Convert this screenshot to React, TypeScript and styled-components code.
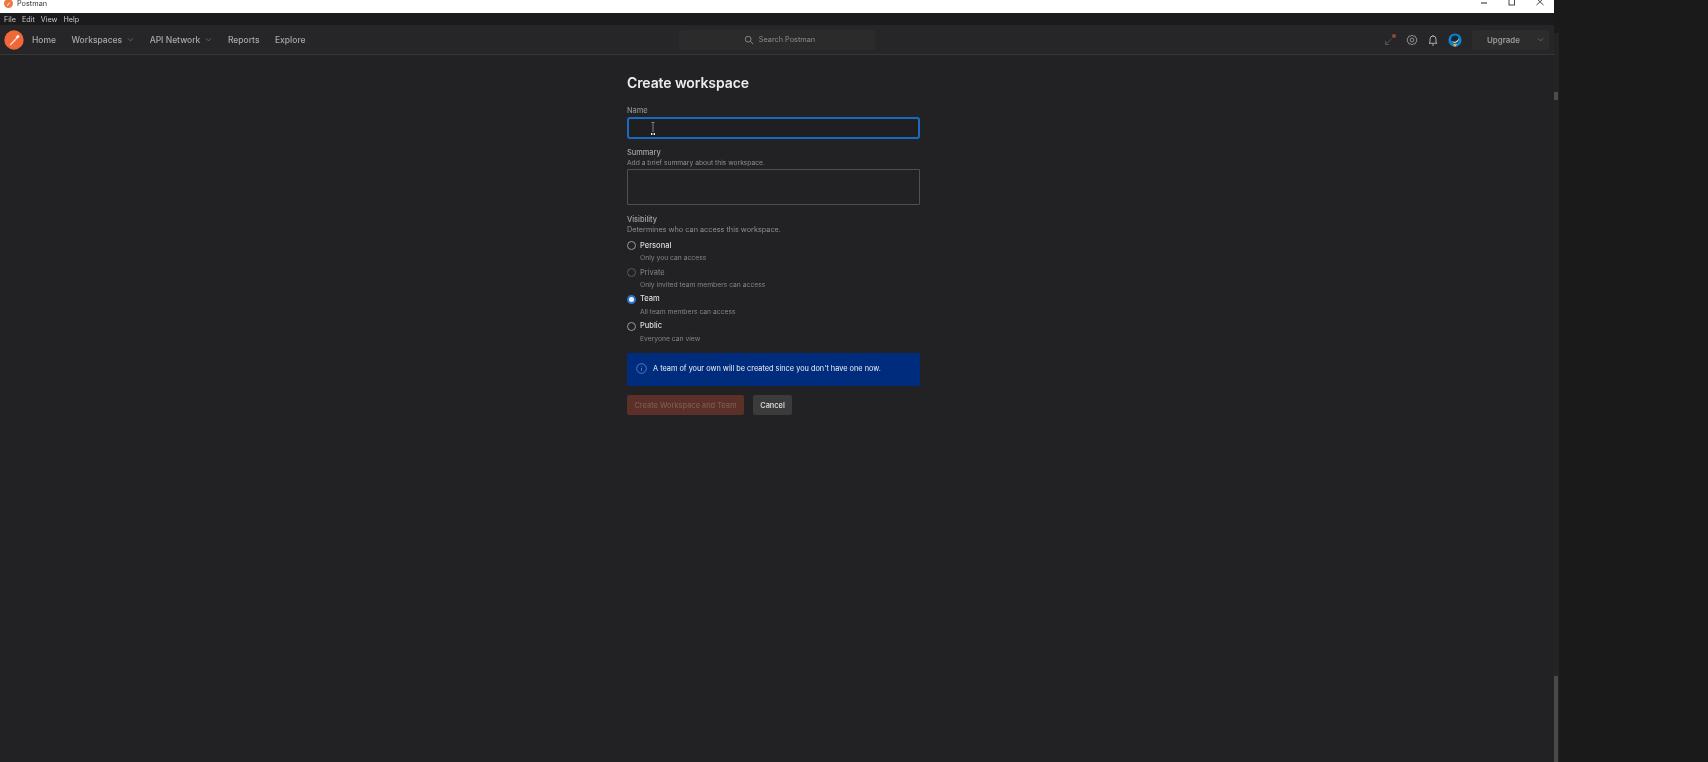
import React from "react";
import styled, { createGlobalStyle } from "styled-components";

const Global = createGlobalStyle`
  html, body { margin: 0; padding: 0; height: 100%; background: #1a1a1a; overflow: hidden; }
  #root { height: 100%; }
  * { box-sizing: border-box; }
`;

const FONT = `Inter, "Liberation Sans", sans-serif`;

const Screen = styled.div`
  display: flex;
  width: 1708px;
  height: 762px;
  overflow: hidden;
  font-family: ${FONT};
  background: #1a1a1a;
  filter: blur(0.3px);
`;
const AppWindow = styled.div`
  display: flex;
  flex-direction: column;
  width: 1554px;
  height: 100%;
`;
const TitleBar = styled.div`
  display: flex;
  align-items: center;
  flex: 0 0 13px;
  height: 13px;
  padding-left: 4px;
  background: #fff;
  color: #333;
  font-size: 7.3px;
  overflow: hidden;
`;
const TitleText = styled.span`
  margin-left: 4px;
  margin-top: -6px;
`;
const TitleIcon = styled.svg`
  margin-top: -6px;
  flex: none;
`;
const WindowButtons = styled.div`
  display: flex;
  align-items: center;
  gap: 18px;
  margin-left: auto;
  margin-right: 9px;
  margin-top: -7px;
`;
const MenuBar = styled.div`
  display: flex;
  align-items: center;
  flex: 0 0 12px;
  gap: 6px;
  padding-left: 4px;
  background: #1b1b1e;
`;
const MenuItem = styled.span`
  color: #c8c8c8;
  font-size: 7.2px;
`;
const Nav = styled.header`
  display: flex;
  align-items: center;
  flex: 0 0 30px;
  padding: 0 5px 0 4px;
  background: #262629;
  border-bottom: 1px solid #37373a;
`;
const NavLinks = styled.nav`
  display: flex;
  align-items: center;
  margin-left: 8px;
  gap: 15.5px;
`;
const NavLink = styled.span`
  display: inline-flex;
  align-items: center;
  gap: 5px;
  color: #a9a9ad;
  font-size: 8.5px;
  font-weight: 500;
`;
const SearchBox = styled.div`
  display: flex;
  align-items: center;
  justify-content: center;
  gap: 5px;
  width: 196px;
  height: 20px;
  margin-left: 373px;
  padding-left: 6px;
  background: #2b2b2c;
  border-radius: 2px;
  color: #8e8e90;
  font-size: 7.3px;
`;
const NavRight = styled.div`
  display: flex;
  align-items: center;
  margin-left: auto;
`;
const IconSlot = styled.span`
  display: inline-flex;
  justify-content: center;
  width: 21.7px;
`;
const UpgradeBox = styled.div`
  display: flex;
  align-items: center;
  justify-content: space-between;
  width: 77px;
  height: 20px;
  margin-left: 6px;
  padding: 0 5px 0 15px;
  background: #2c2c2d;
  border-radius: 2px;
  color: #9b9b9d;
  font-size: 7.9px;
  font-weight: 600;
`;
const Content = styled.main`
  flex: 1;
  display: flex;
  background: #222225;
`;
const Form = styled.section`
  display: flex;
  flex-direction: column;
  width: 293px;
  margin-left: 627px;
  padding-top: 18.5px;
`;
const Title = styled.h1`
  margin: 0;
  color: #ececec;
  font-size: 14px;
  line-height: 18px;
  font-weight: 600;
  letter-spacing: -0.1px;
`;
const FieldLabel = styled.label<{ $top: number; $dim?: boolean }>`
  display: block;
  margin-top: ${(p) => p.$top}px;
  color: ${(p) => (p.$dim ? "#8e8e90" : "#a4a4a6")};
  font-size: 7.4px;
  line-height: 10px;
  font-weight: 500;
`;
const FieldHint = styled.div<{ $size: number }>`
  color: #8f8f92;
  font-size: ${(p) => p.$size}px;
  line-height: 10.5px;
`;
const NameInput = styled.div`
  position: relative;
  height: 22px;
  margin-top: 1px;
  border: 2px solid #1a6ac0;
  border-radius: 3px;
  background: #1f1f22;
`;
const Caret = styled.svg`
  position: absolute;
  left: 21px;
  top: 3px;
`;
const SummaryBox = styled.div`
  height: 36px;
  margin-top: 0.5px;
  border: 1px solid #4f4f52;
  border-radius: 1px;
  background: #222225;
`;
const RadioList = styled.div`
  display: flex;
  flex-direction: column;
  gap: 2.9px;
  margin-top: 4.2px;
`;
const RadioRow = styled.div`
  display: grid;
  grid-template-columns: 9px 1fr;
  column-gap: 4px;
  align-items: center;
`;
const RadioDot = styled.span<{ $state: "off" | "disabled" | "on" }>`
  width: 9px;
  height: 9px;
  border-radius: 50%;
  border: ${(p) =>
    p.$state === "on"
      ? "2.5px solid #2b74cf"
      : p.$state === "disabled"
        ? "1px solid #5a5a5c"
        : "1px solid #9a9a9c"};
  background: ${(p) => (p.$state === "on" ? "#f2f6fb" : "transparent")};
`;
const RadioName = styled.span<{ $muted?: boolean }>`
  color: ${(p) => (p.$muted ? "#838385" : "#dcdcdd")};
  font-size: 7.5px;
  line-height: 12.5px;
  font-weight: ${(p) => (p.$muted ? 400 : 500)};
`;
const RadioHint = styled.span`
  grid-column: 2;
  color: #848487;
  font-size: 6.75px;
  line-height: 11.5px;
`;
const Banner = styled.div`
  display: flex;
  align-items: center;
  gap: 6px;
  height: 33px;
  margin-top: 8.5px;
  padding: 0 0 1px 9px;
  background: #002c7d;
  border-radius: 1px;
  color: #f0f3f8;
  font-size: 7.35px;
`;
const Actions = styled.div`
  display: flex;
  gap: 9px;
  margin-top: 9.5px;
`;
const PrimaryButton = styled.button`
  width: 117px;
  height: 20px;
  padding: 0;
  border: 0;
  border-radius: 2px;
  background: #5a3029;
  color: #7f5a52;
  font-family: ${FONT};
  font-size: 7.4px;
  font-weight: 500;
`;
const GhostButton = styled.button`
  width: 39px;
  height: 20px;
  padding: 0;
  border: 0;
  border-radius: 2px;
  background: #3b3b3c;
  color: #e2e2e2;
  font-family: ${FONT};
  font-size: 7.4px;
  font-weight: 500;
`;
const Gutter = styled.aside`
  display: flex;
  flex-direction: column;
  width: 5px;
  height: 100%;
  padding-top: 33px;
  background: #1a1a1a;
`;
const GutterTrack = styled.div`
  flex: 1;
  display: flex;
  flex-direction: column;
  background: #242425;
`;
const TopThumb = styled.div`
  width: 4px;
  height: 8px;
  margin-top: 59px;
  background: #4c4c4d;
`;
const BottomThumb = styled.div`
  width: 4px;
  margin-top: auto;
  height: 86px;
  background: #4a4a4a;
`;

const Chevron = () => (
  <svg width="7" height="7" viewBox="0 0 10 10" fill="none" stroke="#77777a" strokeWidth="1.1">
    <path d="M1.5 3.5 5 7l3.5-3.5" />
  </svg>
);

const Logo = () => (
  <svg width="20" height="20" viewBox="0 0 20 20">
    <circle cx="10" cy="10" r="9.7" fill="#f0683a" />
    <path d="M5.6 14.8 11.8 8.2l1 1-6.4 6.2z" fill="#fde7dc" />
    <path d="M11.6 7.6 13.4 5.2a1.5 1.5 0 0 1 1.9 1.9l-2.4 1.8z" fill="#fff" />
  </svg>
);

const NavIcons = () => (
  <>
    <IconSlot>
      <svg width="14" height="14" viewBox="0 0 14 14" fill="none">
        <path d="M2.5 8v3.5H6M2.5 11.5 8.5 6" stroke="#555557" strokeWidth="1" />
        <circle cx="11" cy="3" r="2.1" fill="#8a4a38" />
      </svg>
    </IconSlot>
    <IconSlot>
      <svg width="12" height="12" viewBox="0 0 24 24" fill="none" stroke="#9b9b9d" strokeWidth="1.8">
        <path d="M12 2l2.6 2.4 3.4-.5 1 3.3 3 1.8-1.2 3 1.2 3-3 1.8-1 3.3-3.4-.5L12 22l-2.6-2.4-3.4.5-1-3.3-3-1.8 1.2-3-1.2-3 3-1.8 1-3.3 3.4.5z" strokeLinejoin="round" />
        <circle cx="12" cy="12" r="3.8" />
      </svg>
    </IconSlot>
    <IconSlot>
      <svg width="12" height="12" viewBox="0 0 24 24" fill="none" stroke="#bcbcbe" strokeWidth="1.8">
        <path d="M6 17V10a6 6 0 0 1 12 0v7l2 1.5H4zM10 22h4M12 4V2" strokeLinejoin="round" />
      </svg>
    </IconSlot>
    <IconSlot>
      <svg width="14" height="14" viewBox="0 0 14 14">
        <circle cx="7" cy="7" r="6.6" fill="#0d84c9" />
        <circle cx="7" cy="6.4" r="3.9" fill="#14253a" />
        <path d="M3.4 8a4 4 0 0 0 7.2-3.2 4.6 4.6 0 0 1-7.2 3.2z" fill="#f3f6f8" />
        <path d="M5.3 11h3.4l-.5 2.4H5.8z" fill="#e2b34f" />
      </svg>
    </IconSlot>
  </>
);

const radios = [
  { name: "Personal", hint: "Only you can access", state: "off" as const },
  { name: "Private", hint: "Only invited team members can access", state: "disabled" as const },
  { name: "Team", hint: "All team members can access", state: "on" as const },
  { name: "Public", hint: "Everyone can view", state: "off" as const },
];

export default function App() {
  return (
    <Screen>
      <Global />
      <AppWindow>
        <TitleBar>
          <TitleIcon width="9" height="9" viewBox="0 0 20 20">
            <circle cx="10" cy="10" r="10" fill="#f0773f" />
            <path d="M6 14.5 12 7.5l1.5 1.4-6 6z" fill="#fff" />
          </TitleIcon>
          <TitleText>Postman</TitleText>
          <WindowButtons>
            <svg width="10" height="10" viewBox="0 0 10 10"><path d="M2 5h6" stroke="#222" strokeWidth="1" /></svg>
            <svg width="10" height="10" viewBox="0 0 10 10"><rect x="2" y="1" width="5.5" height="6" fill="none" stroke="#333" strokeWidth="0.9" /></svg>
            <svg width="10" height="10" viewBox="0 0 10 10"><path d="M1.5 0.5l7 6.5M8.5 0.5l-7 6.5" stroke="#333" strokeWidth="0.9" /></svg>
          </WindowButtons>
        </TitleBar>
        <MenuBar>
          <MenuItem>File</MenuItem>
          <MenuItem>Edit</MenuItem>
          <MenuItem>View</MenuItem>
          <MenuItem>Help</MenuItem>
        </MenuBar>
        <Nav>
          <Logo />
          <NavLinks>
            <NavLink>Home</NavLink>
            <NavLink>Workspaces <Chevron /></NavLink>
            <NavLink>API Network <Chevron /></NavLink>
            <NavLink>Reports</NavLink>
            <NavLink>Explore</NavLink>
          </NavLinks>
          <SearchBox>
            <svg width="10" height="10" viewBox="0 0 24 24" fill="none" stroke="#949496" strokeWidth="2">
              <circle cx="10" cy="10" r="7" />
              <path d="m15 15 7 7" />
            </svg>
            Search Postman
          </SearchBox>
          <NavRight>
            <NavIcons />
            <UpgradeBox>
              Upgrade <Chevron />
            </UpgradeBox>
          </NavRight>
        </Nav>
        <Content>
          <Form>
            <Title>Create workspace</Title>
            <FieldLabel $top={14.5} $dim>Name</FieldLabel>
            <NameInput>
              <Caret width="6" height="14" viewBox="0 0 6 14" fill="none">
                <path d="M3 1v9M1.5 0.5h3" stroke="#999" strokeWidth="0.8" />
                <path d="M1 11.5h1.4M3.6 11.5H5M1 12.5h1.4M3.6 12.5H5" stroke="#eee" strokeWidth="1" />
              </Caret>
            </NameInput>
            <FieldLabel $top={9}>Summary</FieldLabel>
            <FieldHint $size={6.7}>Add a brief summary about this workspace.</FieldHint>
            <SummaryBox />
            <FieldLabel $top={10}>Visibility</FieldLabel>
            <FieldHint $size={7.3}>Determines who can access this workspace.</FieldHint>
            <RadioList>
              {radios.map((r) => (
                <RadioRow key={r.name}>
                  <RadioDot $state={r.state} />
                  <RadioName $muted={r.state === "disabled"}>{r.name}</RadioName>
                  <RadioHint>{r.hint}</RadioHint>
                </RadioRow>
              ))}
            </RadioList>
            <Banner>
              <svg width="11" height="11" viewBox="0 0 24 24" fill="none" stroke="#6f97da" strokeWidth="1.6">
                <circle cx="12" cy="12" r="10.5" />
                <path d="M12 11v6M12 7v1.6" />
              </svg>
              A team of your own will be created since you don't have one now.
            </Banner>
            <Actions>
              <PrimaryButton>Create Workspace and Team</PrimaryButton>
              <GhostButton>Cancel</GhostButton>
            </Actions>
          </Form>
        </Content>
      </AppWindow>
      <Gutter>
        <GutterTrack>
          <TopThumb />
          <BottomThumb />
        </GutterTrack>
      </Gutter>
    </Screen>
  );
}
